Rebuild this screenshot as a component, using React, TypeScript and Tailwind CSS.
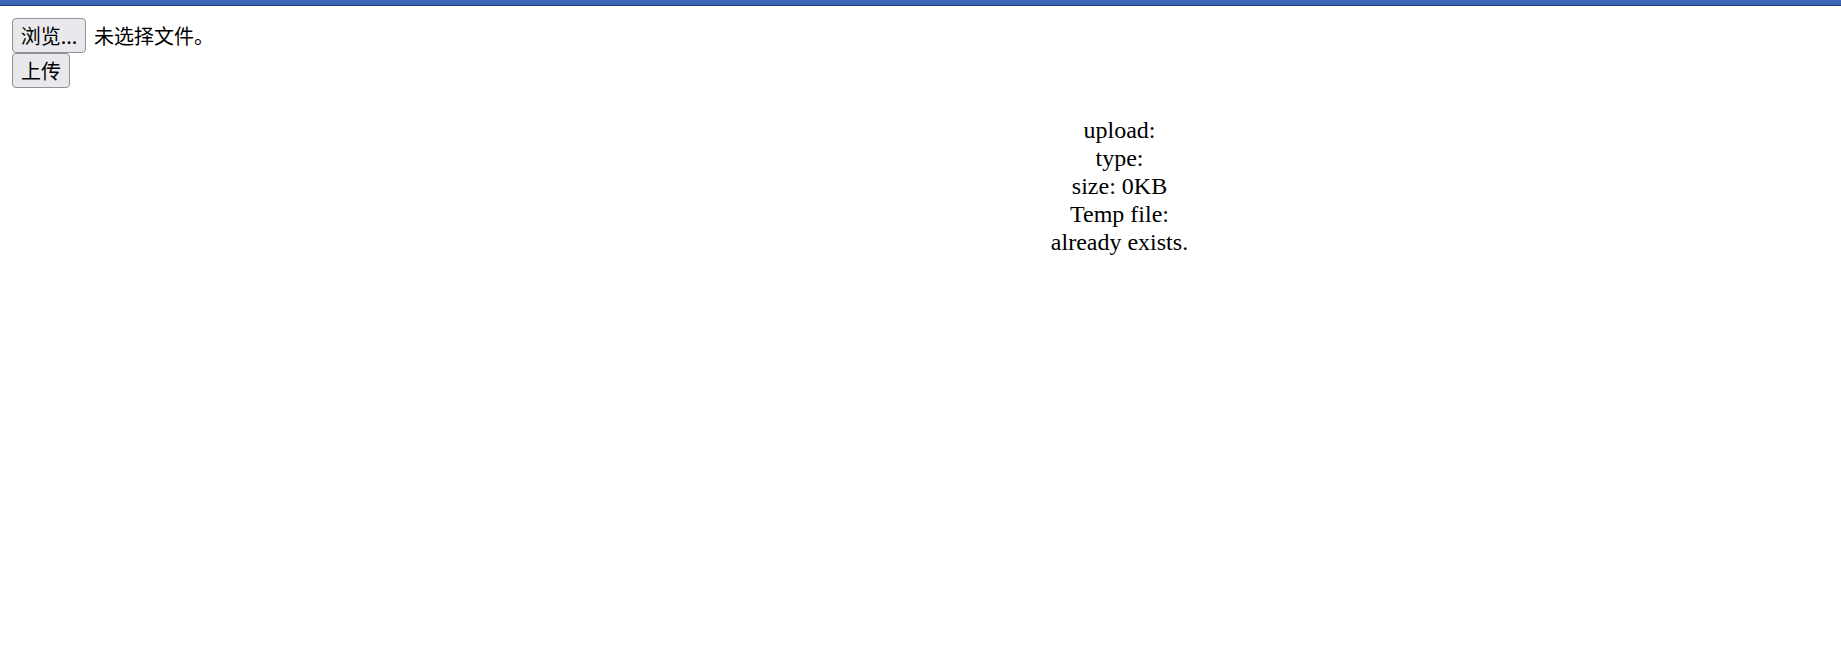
import React from 'react';

const cjk = "font-['Noto_Sans_CJK_SC','Noto_Sans',sans-serif]";

const App = () => {
  return (
    <div className="min-h-[669px] bg-white">
      <div className="h-[5px] bg-[#3c66b6]" />
      <div className="h-px bg-[#1b3c7a]" />
      <div className="px-3 pt-3">
        <div className={`flex items-center h-[35px] ${cjk} text-[20px] text-black`}>
          <button className="h-[35px] w-[74px] rounded-[4px] border border-[#8f8f9d] bg-[#e9e9ed] leading-none">
            浏览...
          </button>
          <span className="ml-[8px] leading-none">未选择文件。</span>
        </div>
        <button className={`h-[35px] w-[58px] rounded-[4px] border border-[#8f8f9d] bg-[#e9e9ed] ${cjk} text-[20px] leading-none text-black`}>
          上传
        </button>
        <div className="mt-[28px] ml-[398px] text-center font-['Liberation_Serif',serif] text-[24px] leading-[28px] text-black">
          <div>upload: </div>
          <div>type: </div>
          <div>size: 0KB</div>
          <div>Temp file: </div>
          <div>already exists.</div>
        </div>
      </div>
    </div>
  );
};

export default App;
